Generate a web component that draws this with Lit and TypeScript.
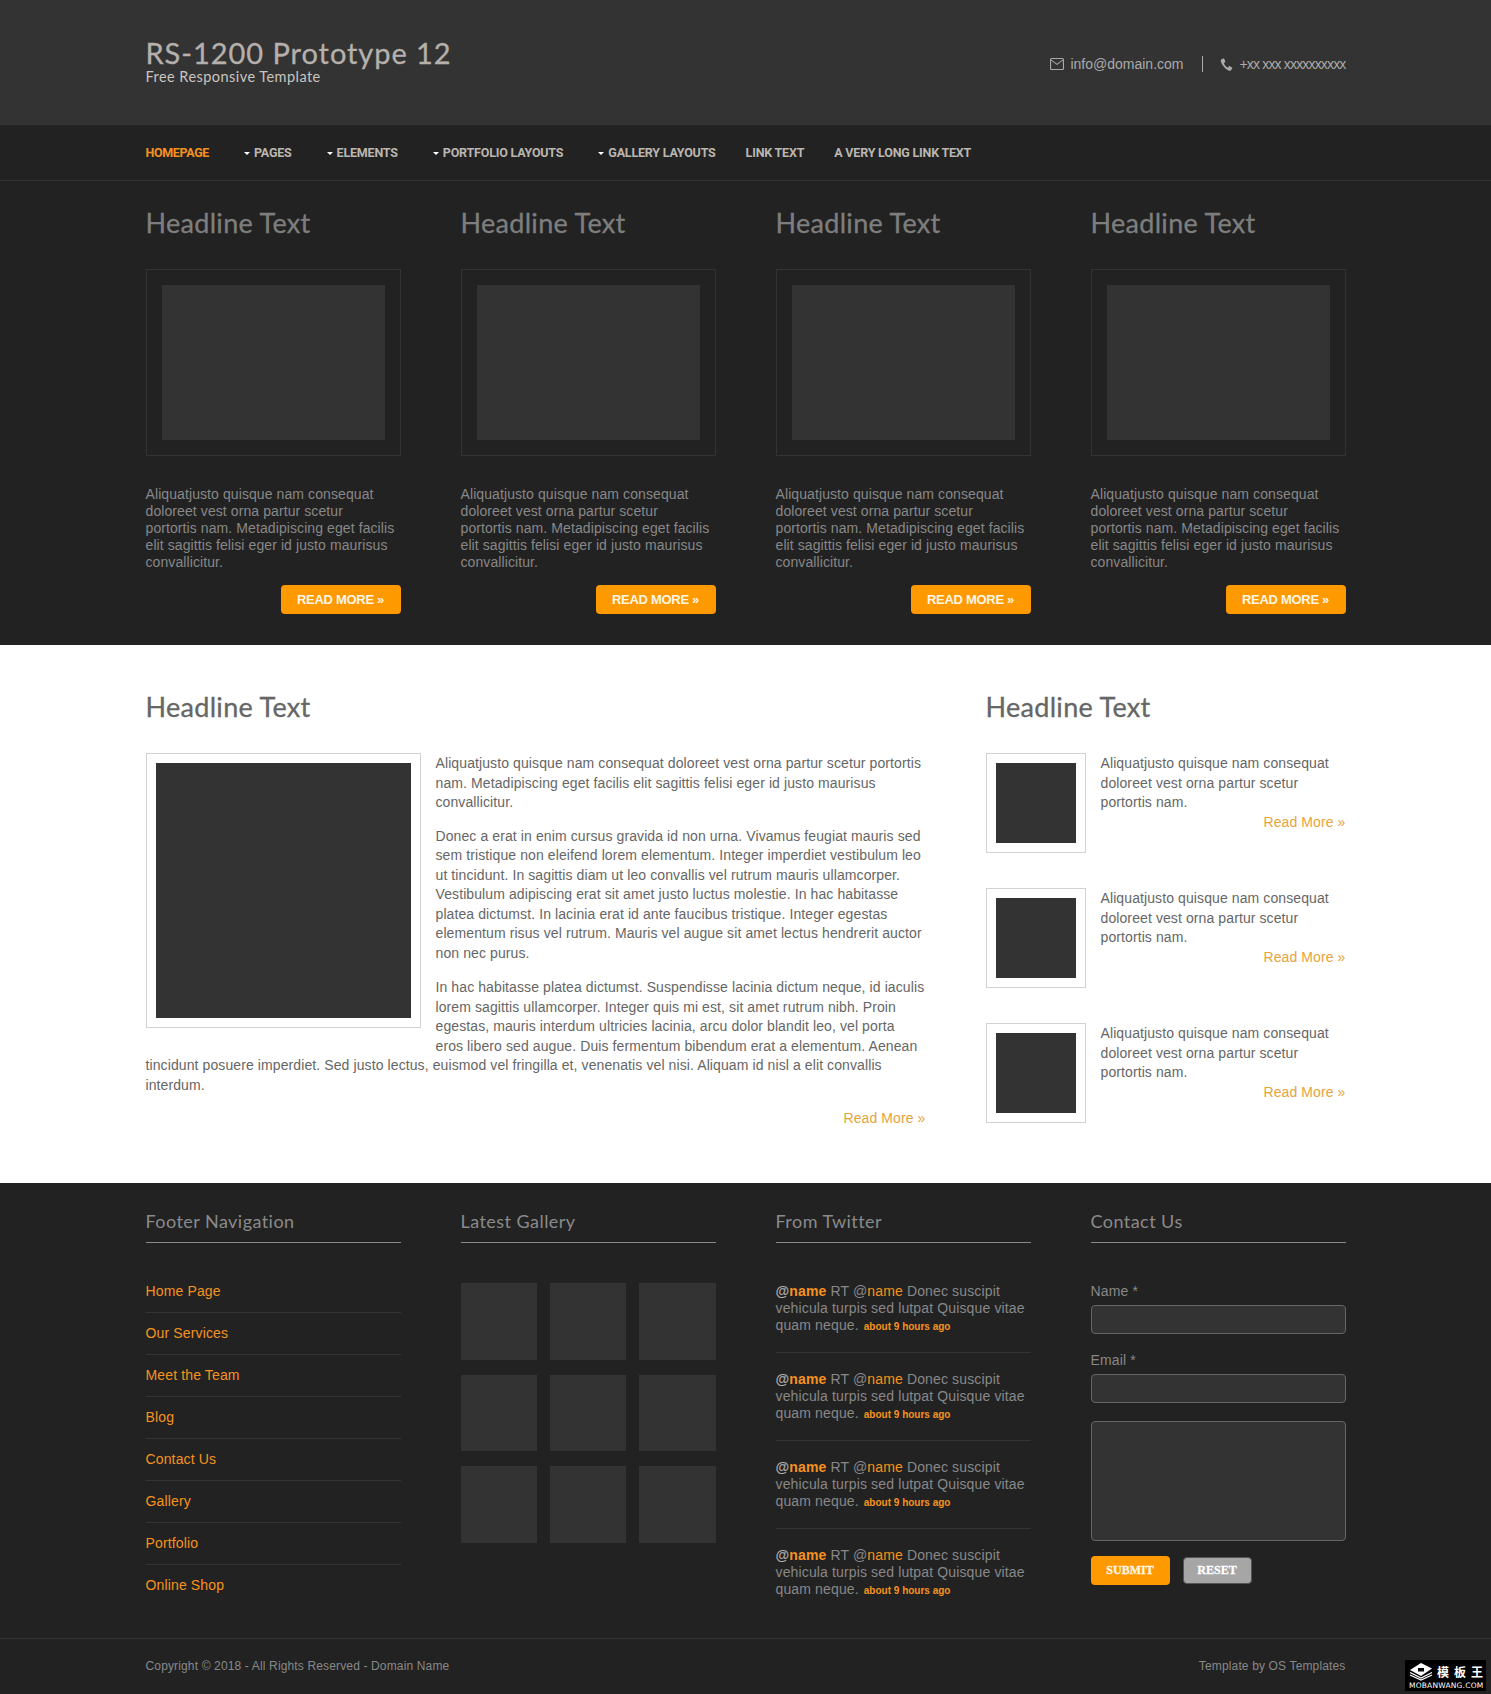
import { LitElement, html, css } from "lit";
import { customElement } from "lit/decorators.js";

const SIDE = "Aliquatjusto quisque nam consequat doloreet vest orna partur scetur portortis nam.";
const NAV: [string, boolean][] = [
  ["Pages", true], ["Elements", true], ["Portfolio Layouts", true], ["Gallery Layouts", true], ["Link Text", false], ["A Very Long Link Text", false],
];
const LINKS = ["Home Page", "Our Services", "Meet the Team", "Blog", "Contact Us", "Gallery", "Portfolio", "Online Shop"];

@customElement("app-root")
export class AppRoot extends LitElement {
  static styles = css`
    :host { display: block; position: relative; width: 1491px; height: 1694px; overflow: hidden; background: #222; font: 14px/17px "Liberation Sans", Arial, sans-serif; letter-spacing: 0.14px; color: #888; }
    * { box-sizing: border-box; }
    a { text-decoration: none; }
    h1, h2, h3, h4, p, ul { margin: 0; padding: 0; font-weight: 400; }
    ul { list-style: none; }
    .wrap { width: 1200px; margin: 0 auto; }
    .headfont { font-family: Lato, "Liberation Sans", sans-serif; }

    .top { height: 125px; background: #333; }
    .top .wrap { display: flex; justify-content: space-between; align-items: flex-start; }
    .brand { padding-top: 35px; }
    .brand h1 { font-size: 29px; line-height: 36px; letter-spacing: 0.95px; color: #b5b0ab; -webkit-text-stroke: 0.3px #b5b0ab; }
    .brand p { font-size: 14.5px; line-height: 17px; letter-spacing: 0.45px; color: #c9c5c0; margin-top: -3px; }
    .contact { display: flex; align-items: center; margin-top: 56px; height: 16px; color: #aaa; }
    .contact .mail { display: flex; align-items: center; gap: 6px; padding-right: 19px; border-right: 1px solid #aaa; height: 16px; font-size: 14px; letter-spacing: 0; }
    .contact .phone { display: flex; align-items: center; gap: 6px; padding-left: 17px; font-size: 14px; letter-spacing: -0.83px; }
    .contact svg { display: block; fill: #aaa; }

    nav { height: 56px; border-bottom: 1px solid #333; }
    nav ul { display: flex; gap: 30px; padding-top: 19px; }
    nav a { display: flex; align-items: center; font-family: Roboto, "Liberation Sans", sans-serif; font-size: 12.5px; line-height: 18px; font-weight: 700; text-transform: uppercase; letter-spacing: -0.2px; color: #bbb6b0; }
    nav a.active { color: #f5921e; letter-spacing: -0.35px; }
    nav a.drop { margin-left: 5px; }
    .caret { width: 0; height: 0; border: 3px solid transparent; border-top: 3.5px solid #fff; border-bottom: 0; margin-right: 4px; }

    .featured { height: 464px; padding-top: 27px; }
    .cols { display: grid; grid-template-columns: repeat(4, 255px); column-gap: 60px; }
    h2 { font-size: 27px; line-height: 30px; letter-spacing: 0.3px; color: #7e7e7e; -webkit-text-stroke: 0.3px #7e7e7e; }
    .imgbox { margin-top: 31px; height: 187px; padding: 15px; border: 1px solid #333; }
    .imgbox div { height: 100%; background: #333; }
    .cols p { margin-top: 30px; height: 85px; letter-spacing: 0.09px; }
    .btnrow { display: flex; justify-content: flex-end; margin-top: 14px; }
    .btn { display: block; width: 120px; height: 29px; line-height: 29px; text-align: center; background: #f90; border-radius: 4px; color: #fff6e6; font-weight: 700; font-size: 13px; letter-spacing: -0.3px; text-transform: uppercase; }

    .content { height: 538px; background: #fff; padding-top: 47px; color: #666; line-height: 19.5px; letter-spacing: 0.1px; }
    .content .wrap { display: grid; grid-template-columns: 780px 360px; column-gap: 60px; }
    .content h2 { color: #666; letter-spacing: 0.3px; -webkit-text-stroke: 0.3px #666; }
    .body { margin-top: 32px; }
    .leadimg { float: left; width: 275px; height: 275px; padding: 9px; margin: -1px 15px 15px 0; border: 1px solid #d2d2d2; }
    .leadimg div, .thumb div { height: 100%; background: #333; }
    .body p { margin-bottom: 14px; }
    .body p:nth-of-type(2) { margin-bottom: 15px; }
    .more { display: block; text-align: right; color: #e8a33a; }
    .side { margin-top: 31px; display: grid; row-gap: 35px; }
    .item { display: flex; gap: 15px; }
    .thumb { flex: none; width: 100px; height: 100px; padding: 9px; border: 1px solid #d2d2d2; }
    .item > div:last-child { flex: 1; padding-top: 1px; }

    .fcols { height: 455px; padding-top: 26px; }
    h4 { font-size: 18px; line-height: 24px; letter-spacing: 0.45px; color: #8a8a8a; padding-bottom: 9px; border-bottom: 1px solid #888; height: 34px; }
    .fbody { margin-top: 40px; }
    .flinks li { padding: 12px 0; border-bottom: 1px solid #333; }
    .flinks li:first-child { padding-top: 0; }
    .flinks li:last-child { border-bottom: 0; }
    .flinks a { color: #f5921e; }
    .gallery { display: grid; grid-template-columns: repeat(3, 76.5px); justify-content: space-between; row-gap: 15px; }
    .gallery div { height: 76.5px; background: #333; }
    .tweets li { padding: 18px 0; border-bottom: 1px solid #333; }
    .tweets li:first-child { padding-top: 0; }
    .tweets li:last-child { border-bottom: 0; }
    .tweets b { color: #aaa; }
    .tweets b span { color: #f5921e; }
    .tweets .n { color: #f5921e; }
    .tweets small { font-size: 10px; line-height: 1; letter-spacing: 0; font-weight: 700; color: #f5921e; margin-left: 1px; }
    form { display: block; }
    label { display: block; }
    .field { display: block; width: 100%; height: 29px; margin: 5px 0 18px; background: #333; border: 1px solid #666; border-radius: 4px; }
    .area { height: 120px; margin: 0 0 15px; resize: none; }
    .actions { display: flex; align-items: center; gap: 13px; }
    .actions button { height: 29px; padding: 0; border-radius: 4px; border: 0; font: 700 12px "Liberation Serif", serif; text-transform: uppercase; color: #fff6e6; letter-spacing: 0; -webkit-text-stroke: 0.3px currentColor; }
    .submit { width: 79px; background: #f90; }
    .reset { width: 69px; height: 27px !important; background: #a6a6a6; color: #fff !important; border: 1px solid #555 !important; }

    .fbar { height: 56px; border-top: 1px solid #333; padding-top: 19px; font-size: 12px; letter-spacing: 0.145px; }
    .fbar .wrap { display: flex; justify-content: space-between; color: #888; }

    .mark { position: absolute; left: 1405px; top: 1660px; width: 81px; height: 31px; background: #000; color: #fff; letter-spacing: 0; }
    .mark svg { position: absolute; left: 4px; top: 2px; }
    .mark .cn { position: absolute; left: 32px; top: 5px; font: 700 12px/13px "Noto Sans CJK SC", sans-serif; letter-spacing: 5px; white-space: nowrap; }
    .mark .en { position: absolute; left: 4px; right: 0; top: 21px; font: 400 7.5px/9px "DejaVu Sans", sans-serif; letter-spacing: 0.2px; white-space: nowrap; }
  `;

  render() {
    return html`
      <header class="top">
        <div class="wrap">
          <div class="brand headfont">
            <h1>RS-1200 Prototype 12</h1>
            <p>Free Responsive Template</p>
          </div>
          <div class="contact">
            <span class="mail">
              <svg width="14" height="12" viewBox="0 0 14 12"><path fill-rule="evenodd" d="M1.5 0h11A1.5 1.5 0 0 1 14 1.5v9a1.5 1.5 0 0 1-1.5 1.5h-11A1.5 1.5 0 0 1 0 10.5v-9A1.5 1.5 0 0 1 1.5 0zM1.1 2.6v7.9c0 .2.2.4.4.4h11c.2 0 .4-.2.4-.4V2.6L7 7.1 1.1 2.6zM1.5 1.1c-.2 0-.4.2-.4.4L7 5.8l5.9-4.3c0-.2-.2-.4-.4-.4h-11z"/></svg>
              info@domain.com
            </span>
            <span class="phone">
              <svg width="13" height="13" viewBox="0 0 13 13"><path d="M3.4.4 1.2 1.6C.5 2 .7 3.6 1.5 5.3c1.300 2.800 4 5.700 6.500 7 1.400.7 2.500.7 3-.1l1.200-1.800c.2-.3.1-.6-.2-.8L9.800 8.200c-.3-.2-.6-.1-.8.1l-.9 1.100c-.2.2-.5.2-.7.1C5.900 8.600 4.600 7 4 5.500c-.1-.3 0-.5.2-.7l.9-.6c.3-.2.3-.5.2-.8L4.200.7C4 .3 3.700.2 3.400.4z"/></svg>
              +xx xxx xxxxxxxxxx
            </span>
          </div>
        </div>
      </header>

      <nav>
        <ul class="wrap">
          <li><a class="active" href="#">Homepage</a></li>
          ${NAV.map(([t, d]) => html`<li><a class=${d ? "drop" : ""} href="#">${d ? html`<i class="caret"></i>` : ""}${t}</a></li>`)}
        </ul>
      </nav>

      <section class="featured">
        <div class="wrap cols">
          ${[0, 1, 2, 3].map(() => html`
            <article>
              <h2 class="headfont">Headline Text</h2>
              <div class="imgbox"><div></div></div>
              <p>Aliquatjusto quisque nam consequat doloreet vest orna partur scetur<br />portortis nam. Metadipiscing eget facilis elit sagittis felisi eger id justo maurisus convallicitur.</p>
              <div class="btnrow"><a class="btn" href="#">Read More »</a></div>
            </article>`)}
        </div>
      </section>

      <section class="content">
        <div class="wrap">
          <main>
            <h2 class="headfont">Headline Text</h2>
            <div class="body">
              <div class="leadimg"><div></div></div>
              <p>Aliquatjusto quisque nam consequat doloreet vest orna partur scetur portortis nam. Metadipiscing eget facilis elit sagittis felisi eger id justo maurisus convallicitur.</p>
              <p>Donec a erat in enim cursus gravida id non urna. Vivamus feugiat mauris sed sem tristique non eleifend lorem elementum. Integer imperdiet vestibulum leo ut tincidunt. In sagittis diam ut leo convallis vel rutrum mauris ullamcorper. Vestibulum adipiscing erat sit amet justo luctus molestie. In hac habitasse platea dictumst. In lacinia erat id ante faucibus tristique. Integer egestas elementum risus vel rutrum. Mauris vel augue sit amet lectus hendrerit auctor non nec purus.</p>
              <p>In hac habitasse platea dictumst. Suspendisse lacinia dictum neque, id iaculis lorem sagittis ullamcorper. Integer quis mi est, sit amet rutrum nibh. Proin egestas, mauris interdum ultricies lacinia, arcu dolor blandit leo, vel porta eros libero sed augue. Duis fermentum bibendum erat a elementum. Aenean tincidunt posuere imperdiet. Sed justo lectus, euismod vel fringilla et, venenatis vel nisi. Aliquam id nisl a elit convallis interdum.</p>
              <a class="more" href="#">Read More »</a>
            </div>
          </main>
          <aside>
            <h2 class="headfont">Headline Text</h2>
            <div class="side">
              ${[0, 1, 2].map(() => html`
                <div class="item">
                  <div class="thumb"><div></div></div>
                  <div>${SIDE}<a class="more" href="#">Read More »</a></div>
                </div>`)}
            </div>
          </aside>
        </div>
      </section>

      <footer>
        <div class="fcols">
          <div class="wrap cols">
            <div>
              <h4 class="headfont">Footer Navigation</h4>
              <ul class="fbody flinks">${LINKS.map((l) => html`<li><a href="#">${l}</a></li>`)}</ul>
            </div>
            <div>
              <h4 class="headfont">Latest Gallery</h4>
              <div class="fbody gallery">${[0, 1, 2, 3, 4, 5, 6, 7, 8].map(() => html`<div></div>`)}</div>
            </div>
            <div>
              <h4 class="headfont">From Twitter</h4>
              <ul class="fbody tweets">
                ${[0, 1, 2, 3].map(() => html`<li><b>@<span>name</span></b> RT @<span class="n">name</span> Donec suscipit vehicula turpis sed lutpat Quisque vitae quam neque. <small>about 9 hours ago</small></li>`)}
              </ul>
            </div>
            <div>
              <h4 class="headfont">Contact Us</h4>
              <form class="fbody">
                <label>Name *</label>
                <input class="field" type="text" />
                <label>Email *</label>
                <input class="field" type="text" />
                <textarea class="field area"></textarea>
                <div class="actions">
                  <button class="submit" type="button">Submit</button>
                  <button class="reset" type="button">Reset</button>
                </div>
              </form>
            </div>
          </div>
        </div>
        <div class="fbar">
          <div class="wrap">
            <span>Copyright © 2018 - All Rights Reserved - Domain Name</span>
            <span>Template by OS Templates</span>
          </div>
        </div>
      </footer>

      <div class="mark">
        <svg width="24" height="19" viewBox="0 0 24 19" fill="none" stroke="#fff" stroke-width="1.2"><path d="M1 10.500 12 16l11-5.500M1 13l11 5 11-5"/><path fill="#fff" stroke="none" d="M12 1 23 6.500 12 14 1 8z"/><path fill="#000" stroke="none" d="M9 6h6v3.500H9z"/></svg>
        <span class="cn">模板王</span>
        <span class="en">MOBANWANG.COM</span>
      </div>
    `;
  }
}
